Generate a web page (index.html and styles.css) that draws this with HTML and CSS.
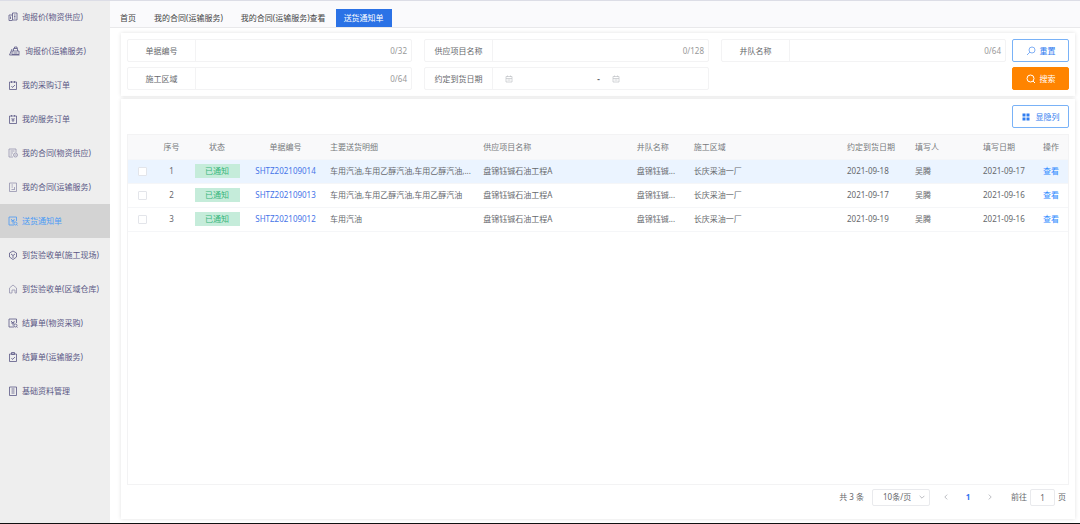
FILE: index.html
```html
<!DOCTYPE html>
<html lang="zh-CN">
<head>
    <meta charset="UTF-8">
    <meta name="viewport" content="width=device-width, initial-scale=1.0">
    <title>送货通知单</title>
    <link rel="stylesheet" href="styles.css">
</head>
<body>

<!-- Sidebar menu -->
<nav class="sidebar">
    <a href="#" class="menu-item">
        <svg class="icon" viewBox="0 0 20 20"><path d="M9 2h9v14H9zM9 6H2v11h7M12 6h3M12 9h3M12 12h3M5 9v5"/></svg>
        询报价(物资供应)
    </a>
    <a href="#" class="menu-item">
        <svg class="icon icon-wide" viewBox="0 0 24 20"><path d="M7 10h14v7H7zM10 10V5h8v5M12 5V2h5v3M7 6l-5 12h20M10 14h8"/></svg>
        询报价(运输服务)
    </a>
    <a href="#" class="menu-item">
        <svg class="icon" viewBox="0 0 20 20"><path d="M3 4h14v15H3zM7 2v4M13 2v4M7 12l2 3 5-5"/></svg>
        我的采购订单
    </a>
    <a href="#" class="menu-item">
        <svg class="icon" viewBox="0 0 20 20"><path d="M3 4h14v15H3zM7 2v3M13 2v3M7 8l3 3 3-3M7 12h6M10 11v5"/></svg>
        我的服务订单
    </a>
    <a href="#" class="menu-item">
        <svg class="icon icon-light" viewBox="0 0 20 20"><path d="M16 9V2H2v16h8M5 6h8M5 10h5M5 14h3"/><circle cx="15" cy="14" r="4"/><path d="M13 14h4"/></svg>
        我的合同(物资供应)
    </a>
    <a href="#" class="menu-item">
        <svg class="icon icon-light" viewBox="0 0 20 20"><path d="M3 2h14v17H3zM7 6h3M7 10h3M7 15h7M13 10v4"/></svg>
        我的合同(运输服务)
    </a>
    <a href="#" class="menu-item active">
        <svg class="icon" viewBox="0 0 20 20"><path d="M17 10V2H2v16h10M6 6l4 4 3-4M6 10h7M10 10v5"/><circle cx="15" cy="15" r="3"/><path d="M17 17l2 2"/></svg>
        送货通知单
    </a>
    <a href="#" class="menu-item">
        <svg class="icon" viewBox="0 0 20 20"><path d="M10 2l7 4v8l-7 5-7-5V6zM6 8l4 3 4-3M10 11v5"/></svg>
        到货验收单(施工现场)
    </a>
    <a href="#" class="menu-item">
        <svg class="icon icon-light" viewBox="0 0 20 20"><path d="M8 18H3V8l7-6 7 6v10h-3M8 18v-6h6v6"/></svg>
        到货验收单(区域仓库)
    </a>
    <a href="#" class="menu-item">
        <svg class="icon" viewBox="0 0 20 20"><path d="M17 10V2H2v16h10M6 6l4 4 3-4M6 10h7M10 10v5"/><circle cx="15" cy="15" r="3"/><path d="M17 17l2 2"/></svg>
        结算单(物资采购)
    </a>
    <a href="#" class="menu-item">
        <svg class="icon" viewBox="0 0 20 20"><path d="M3 4h14v15H3zM7 1h6v4H7zM7 12l2 3 5-5"/></svg>
        结算单(运输服务)
    </a>
    <a href="#" class="menu-item">
        <svg class="icon" viewBox="0 0 20 20"><path d="M3 2h14v17H3zM7 6h6M7 10h6M7 14h6"/></svg>
        基础资料管理
    </a>
</nav>

<div class="page">
    <!-- Opened tabs -->
    <div class="tabs">
        <a href="#" class="tab">首页</a>
        <a href="#" class="tab">我的合同(运输服务)</a>
        <a href="#" class="tab">我的合同(运输服务)查看</a>
        <a href="#" class="tab current">送货通知单</a>
    </div>

    <main class="content">
        <!-- Search form -->
        <form class="panel search">
            <div class="fields">
                <div class="field">
                    <label for="billNo">单据编号</label>
                    <input type="text" id="billNo" maxlength="32">
                    <span class="count">0/32</span>
                </div>
                <div class="field">
                    <label for="project">供应项目名称</label>
                    <input type="text" id="project" maxlength="128">
                    <span class="count">0/128</span>
                </div>
                <div class="field">
                    <label for="team">井队名称</label>
                    <input type="text" id="team" maxlength="64">
                    <span class="count">0/64</span>
                </div>
                <div class="field">
                    <label for="area">施工区域</label>
                    <input type="text" id="area" maxlength="64">
                    <span class="count">0/64</span>
                </div>
                <div class="field">
                    <label for="dateFrom">约定到货日期</label>
                    <svg class="calendar" viewBox="0 0 16 16"><path d="M2 3h12v11H2zM2 7h12M5 1v3M11 1v3M5 10h6"/></svg>
                    <input type="text" id="dateFrom">
                    <span class="dash">-</span>
                    <svg class="calendar" viewBox="0 0 16 16"><path d="M2 3h12v11H2zM2 7h12M5 1v3M11 1v3M5 10h6"/></svg>
                    <input type="text" id="dateTo" aria-label="约定到货日期止">
                </div>
            </div>
            <div class="actions">
                <button type="reset" class="button">
                    <svg class="icon reset-icon" viewBox="0 0 20 20"><circle cx="12" cy="8" r="6"/><path d="M8 12l-6 6"/></svg>
                    重置
                </button>
                <button type="button" class="button primary">
                    <svg class="icon" viewBox="0 0 20 20"><circle cx="9" cy="9" r="7"/><path d="M14 14l4 4"/></svg>
                    搜索
                </button>
            </div>
        </form>

        <!-- Result list -->
        <section class="panel list">
            <div class="toolbar">
                <button type="button" class="button">
                    <svg class="grid-icon" viewBox="0 0 16 16"><path d="M1 1h6v6H1zM9 1h6v6H9zM1 9h6v6H1zM9 9h6v6H9z"/></svg>
                    显隐列
                </button>
            </div>
            <div class="table-box">
                <table>
                    <colgroup>
                        <col class="w-check"><col class="w-index"><col class="w-status"><col class="w-bill">
                        <col><col><col class="w-team"><col>
                        <col class="w-date"><col class="w-date"><col class="w-status"><col class="w-op">
                    </colgroup>
                    <thead>
                        <tr>
                            <th></th>
                            <th class="center">序号</th>
                            <th class="center">状态</th>
                            <th class="center">单据编号</th>
                            <th>主要送货明细</th>
                            <th>供应项目名称</th>
                            <th>井队名称</th>
                            <th>施工区域</th>
                            <th>约定到货日期</th>
                            <th>填写人</th>
                            <th>填写日期</th>
                            <th>操作</th>
                        </tr>
                    </thead>
                    <tbody>
                        <tr class="hovered">
                            <td class="center"><input type="checkbox" aria-label="选择第1行"></td>
                            <td class="center">1</td>
                            <td class="center"><span class="tag">已通知</span></td>
                            <td class="center"><a href="#" class="bill">SHTZ202109014</a></td>
                            <td>车用汽油,车用乙醇汽油,车用乙醇汽油,...</td>
                            <td>盘锦钰铖石油工程A</td>
                            <td>盘锦钰铖...</td>
                            <td>长庆采油一厂</td>
                            <td>2021-09-18</td>
                            <td>吴腾</td>
                            <td>2021-09-17</td>
                            <td><a href="#" class="view">查看</a></td>
                        </tr>
                        <tr>
                            <td class="center"><input type="checkbox" aria-label="选择第2行"></td>
                            <td class="center">2</td>
                            <td class="center"><span class="tag">已通知</span></td>
                            <td class="center"><a href="#" class="bill">SHTZ202109013</a></td>
                            <td>车用汽油,车用乙醇汽油,车用乙醇汽油</td>
                            <td>盘锦钰铖石油工程A</td>
                            <td>盘锦钰铖...</td>
                            <td>长庆采油一厂</td>
                            <td>2021-09-17</td>
                            <td>吴腾</td>
                            <td>2021-09-16</td>
                            <td><a href="#" class="view">查看</a></td>
                        </tr>
                        <tr>
                            <td class="center"><input type="checkbox" aria-label="选择第3行"></td>
                            <td class="center">3</td>
                            <td class="center"><span class="tag">已通知</span></td>
                            <td class="center"><a href="#" class="bill">SHTZ202109012</a></td>
                            <td>车用汽油</td>
                            <td>盘锦钰铖石油工程A</td>
                            <td>盘锦钰铖...</td>
                            <td>长庆采油一厂</td>
                            <td>2021-09-19</td>
                            <td>吴腾</td>
                            <td>2021-09-16</td>
                            <td><a href="#" class="view">查看</a></td>
                        </tr>
                    </tbody>
                </table>
            </div>
            <div class="pagination">
                <span>共 3 条</span>
                <div class="page-size">
                    <select aria-label="每页条数">
                        <option>10条/页</option>
                        <option>20条/页</option>
                    </select>
                    <svg class="chevron" viewBox="0 0 10 10"><path d="M1 3l4 4 4-4"/></svg>
                </div>
                <div class="pager">
                    <button type="button" aria-label="上一页"><svg class="chevron" viewBox="0 0 10 10"><path d="M7 1L3 5l4 4"/></svg></button>
                    <button type="button" class="on">1</button>
                    <button type="button" aria-label="下一页"><svg class="chevron" viewBox="0 0 10 10"><path d="M3 1l4 4-4 4"/></svg></button>
                </div>
                <div class="jump">
                    <label for="jumpPage">前往</label>
                    <input type="text" id="jumpPage" value="1">
                    <span>页</span>
                </div>
            </div>
        </section>
    </main>
</div>

</body>
</html>
```
FILE: styles.css
```css
* {
    box-sizing: border-box;
}
body {
    display: flex;
    min-height: 100vh;
    margin: 0;
    border-bottom: 1px solid #111;
    background-color: #fff;
    color: #66686c;
    font-family: "Noto Sans", "Noto Sans CJK SC", sans-serif;
    font-size: 8px;
    line-height: 12px;
}
a {
    color: inherit;
    text-decoration: none;
}
input, select, button {
    font: inherit;
    color: inherit;
}
svg {
    flex: none;
    fill: none;
    stroke: currentColor;
    stroke-width: 2;
}
.icon {
    width: 10px;
    height: 10px;
}
.icon-wide {
    width: 13px;
}
.icon-light {
    opacity: 0.6;
}

/* sidebar */
.sidebar {
    flex: none;
    width: 110px;
    background-color: #eee;
    box-shadow: inset 0 1px #dcdde6;
    color: #5a5885;
}
.menu-item {
    display: flex;
    align-items: center;
    gap: 4px;
    height: 34px;
    padding-left: 8px;
    white-space: nowrap;
}
.menu-item svg {
    stroke-width: 1.6;
}
.menu-item.active {
    background-color: #d3d3d3;
    color: #4c9bf5;
}

/* tabs */
.page {
    display: flex;
    flex: 1;
    flex-direction: column;
    min-width: 0;
}
.tabs {
    display: flex;
    align-items: flex-end;
    gap: 2px;
    height: 28px;
    padding-left: 2px;
    border-top: 1px solid #dcdde6;
    border-bottom: 1px solid #e9e9eb;
    background-color: #fafafc;
    color: #444;
}
.tab {
    padding: 3px 8px;
}
.tab.current {
    background-color: #2b72e6;
    color: #fff;
}

/* panels */
.content {
    display: flex;
    flex: 1;
    flex-direction: column;
    gap: 3px;
    padding: 5px 5px 4px 11px;
}
.panel {
    padding: 6px;
    background-color: #fff;
    box-shadow: 0 0 4px rgba(0, 0, 0, 0.12);
}
.search {
    display: flex;
    gap: 6px;
}
.fields {
    display: grid;
    flex: 1;
    grid-template-columns: repeat(3, minmax(0, 1fr));
    gap: 5px 12px;
}
.field {
    display: flex;
    align-items: center;
    height: 23px;
    padding-right: 4px;
    border: 1px solid #f3f3f4;
    border-radius: 2px;
}
.field label {
    flex: none;
    width: 68px;
    border-right: 1px solid #f3f3f4;
    line-height: 21px;
    text-align: center;
}
.field input {
    flex: 1;
    min-width: 0;
    border: none;
    outline: none;
    background: none;
}
.count {
    color: #999;
}
.calendar {
    width: 8px;
    height: 8px;
    margin-left: 12px;
    color: #c3c5ca;
    stroke-width: 1.5;
}
.dash {
    font-weight: bold;
}
.actions {
    display: flex;
    flex-direction: column;
    gap: 5px;
}
.button {
    display: flex;
    align-items: center;
    justify-content: center;
    gap: 4px;
    width: 57px;
    height: 23px;
    padding: 0;
    border: 1px solid #79b2f7;
    border-radius: 2px;
    background-color: #fff;
    color: #2f7df0;
    cursor: pointer;
}
.reset-icon {
    opacity: 0.6;
}
.button.primary {
    border-color: #ff8400;
    background-color: #ff8400;
    color: #fff;
}
.grid-icon {
    width: 8px;
    height: 8px;
    margin-right: 2px;
    fill: currentColor;
    stroke: none;
}

/* list */
.list {
    display: flex;
    flex: 1;
    flex-direction: column;
    padding-bottom: 10px;
}
.toolbar {
    display: flex;
    justify-content: flex-end;
    margin-bottom: 6px;
}
.table-box {
    flex: 1;
    border: 1px solid #f3f3f4;
}
table {
    width: 100%;
    border-collapse: collapse;
    table-layout: fixed;
}
th, td {
    height: 24px;
    padding: 0 5px 0 6px;
    border-bottom: 1px solid #f5f6f8;
    font-weight: normal;
    text-align: left;
    white-space: nowrap;
}
th {
    background-color: #f9f9fa;
    color: #77797d;
}
.center {
    padding: 0;
    text-align: center;
}
.hovered {
    background-color: #ebf4ff;
}
.w-check {
    width: 28px;
}
.w-index {
    width: 31px;
}
.w-status {
    width: 60px;
}
.w-bill {
    width: 77px;
}
.w-team {
    width: 57px;
}
.w-date {
    width: 68px;
}
.w-op {
    width: 31px;
}
input[type="checkbox"] {
    width: 9px;
    height: 9px;
    margin: 0;
    border: 1px solid #e3e5ea;
    border-radius: 1px;
    background-color: #fff;
    vertical-align: middle;
    appearance: none;
}
input[type="checkbox"]:checked {
    background-color: #2f7df0;
}
.tag {
    display: inline-block;
    width: 45px;
    background-color: #c5ecda;
    color: #35b57a;
    line-height: 14px;
}
.bill {
    color: #4674e8;
}
.view {
    color: #2f8bff;
}

/* pagination */
.pagination {
    display: flex;
    align-items: center;
    justify-content: flex-end;
    height: 24px;
    padding-right: 3px;
}
.page-size {
    display: flex;
    align-items: center;
    margin: 0 5px 0 8px;
    padding-right: 4px;
    border: 1px solid #e9eaed;
    border-radius: 2px;
}
.page-size select {
    width: 46px;
    height: 15px;
    padding: 0 0 0 10px;
    border: none;
    outline: none;
    background: none;
    appearance: none;
}
.chevron {
    width: 6px;
    height: 6px;
    color: #b4b6bb;
    stroke-width: 1.5;
}
.pager {
    display: flex;
    margin-right: 10px;
}
.pager button {
    display: flex;
    align-items: center;
    justify-content: center;
    width: 22px;
    height: 16px;
    padding: 0;
    border: none;
    background: none;
    cursor: pointer;
}
.pager .on {
    color: #2f72f0;
    font-weight: bold;
}
.jump {
    display: flex;
    align-items: center;
    gap: 3px;
}
.jump input {
    width: 25px;
    height: 17px;
    padding: 0;
    border: 1px solid #e9eaed;
    border-radius: 2px;
    outline: none;
    text-align: center;
}
```
